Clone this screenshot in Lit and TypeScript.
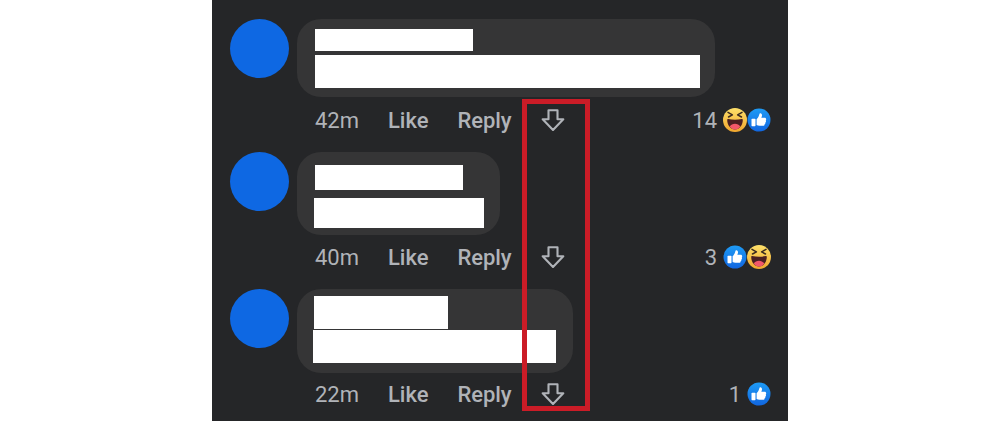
import { LitElement, html, css, svg } from "lit";
import { customElement } from "lit/decorators.js";

const like = html`<svg class="react" viewBox="0 0 24 24">
  <defs>
    <linearGradient id="lg" x1="0" y1="0" x2="0" y2="1">
      <stop offset="0" stop-color="#1e9bf5" />
      <stop offset="1" stop-color="#1166e0" />
    </linearGradient>
  </defs>
  <circle cx="12" cy="12" r="11.500" fill="url(#lg)" />
  ${svg`<path fill="#fff" d="M5.200 10.800h2.600c.4 0 .7.300.7.700v6c0 .4-.3.700-.7.700H5.200c-.4 0-.7-.3-.7-.7v-6c0-.4.300-.7.700-.7z" />
  <path fill="#fff" d="M9.600 11.200c1.300-1 2.200-2.600 2.600-4.400.2-.9.4-1.600 1.200-1.600 1.200 0 1.700 1.200 1.600 2.400-.1.800-.4 1.500-.7 2.200h3.200c1.100 0 1.700.7 1.700 1.500 0 .5-.2.900-.5 1.200.3.300.4.700.3 1.100-.1.400-.3.700-.6.900.1.400.1.800-.1 1.100-.2.300-.4.500-.7.600.1.900-.5 1.600-1.500 1.600h-3.600c-1.100 0-2-.3-2.900-.8z" />`}
</svg>`;

const haha = html`<svg class="react" viewBox="0 0 24 24">
  <defs>
    <linearGradient id="hg" x1="0" y1="0" x2="0" y2="1">
      <stop offset="0" stop-color="#fde06a" />
      <stop offset="1" stop-color="#f0a62e" />
    </linearGradient>
  </defs>
  <circle cx="12" cy="12" r="12" fill="url(#hg)" />
  ${svg`<path fill="none" stroke="#3a2a20" stroke-width="1.500" stroke-linecap="round" stroke-linejoin="round" d="M5 4.400l4.400 2.500-3.900 2.100M19 4.400l-4.400 2.500 3.900 2.100" />
  <path fill="#4a1f22" d="M4.200 11.800c0-.5.400-.8.900-.7 4.600.8 9.200.8 13.800 0 .5-.1.900.2.900.7 0 5.200-3.300 9.800-7.800 9.800S4.200 17 4.200 11.800z" />
  <path fill="#f2586a" d="M6.800 18.400c1.100-1.700 3-2.700 5.200-2.700s4.100 1 5.200 2.700c-1.300 2-3.100 3.200-5.200 3.200s-3.900-1.200-5.200-3.200z" />`}
</svg>`;

const arrow = html`<svg class="arrow" viewBox="0 0 24 22">
  <path fill="none" stroke="currentColor" stroke-width="2.100" stroke-linejoin="round" d="M7.500 1.300h9v9h5.800L12 21 1.700 10.300h5.800z" />
</svg>`;

interface Bar {
  w: number;
  h: number;
  ml: number;
  mt: number;
}

interface Comment {
  time: string;
  bubble: [number, number];
  pad: number;
  bars: Bar[];
  metaTop: number;
  count: string;
  reacts: unknown[];
}

const comments: Comment[] = [
  {
    time: "42m",
    bubble: [418, 78],
    pad: 10,
    bars: [
      { w: 158, h: 22, ml: 18, mt: 0 },
      { w: 385, h: 33, ml: 18, mt: 4 },
    ],
    metaTop: 8,
    count: "14",
    reacts: [haha, like],
  },
  {
    time: "40m",
    bubble: [203, 83],
    pad: 13,
    bars: [
      { w: 148, h: 25, ml: 18, mt: 0 },
      { w: 170, h: 30, ml: 17, mt: 8 },
    ],
    metaTop: 7,
    count: "3",
    reacts: [like, haha],
  },
  {
    time: "22m",
    bubble: [276, 84],
    pad: 7,
    bars: [
      { w: 134, h: 33, ml: 17, mt: 0 },
      { w: 243, h: 33, ml: 16, mt: 1 },
    ],
    metaTop: 6,
    count: "1",
    reacts: [like],
  },
];

@customElement("app-root")
export class AppRoot extends LitElement {
  static styles = css`
    :host {
      display: block;
      height: 421px;
      background: #fff;
      font-family: Roboto, "Liberation Sans", sans-serif;
    }
    .panel {
      position: relative;
      width: 576px;
      height: 421px;
      margin-left: 212px;
      padding: 19px 17px 0 18px;
      box-sizing: border-box;
      background: #252628;
      overflow: hidden;
    }
    .comment {
      display: flex;
      gap: 8px;
      height: 137px;
    }
    .comment:first-child {
      height: 133px;
    }
    .avatar {
      flex: none;
      width: 59px;
      height: 59px;
      border-radius: 50%;
      background: #0e68e3;
    }
    .body {
      flex: 1;
      min-width: 0;
    }
    .bubble {
      box-sizing: border-box;
      background: #353536;
      border-radius: 24px;
    }
    .bar {
      background: #fff;
    }
    .meta {
      display: flex;
      align-items: center;
      gap: 29px;
      height: 30px;
      padding-left: 18px;
      font-size: 22px;
      color: #b0b3b8;
    }
    .action {
      font-weight: 500;
      letter-spacing: -0.05px;
    }
    .arrow {
      width: 24px;
      height: 22px;
    }
    .count {
      display: flex;
      align-items: center;
      gap: 6px;
      margin-left: auto;
    }
    .reacts {
      display: flex;
    }
    .react {
      width: 24px;
      height: 24px;
      display: block;
    }
    .highlight {
      position: absolute;
      left: 310px;
      top: 99px;
      width: 68px;
      height: 312px;
      box-sizing: border-box;
      border: 5px solid #cb1c27;
    }
  `;

  render() {
    return html`
      <div class="panel">
        ${comments.map(
          (c) => html`
            <div class="comment">
              <div class="avatar"></div>
              <div class="body">
                <div
                  class="bubble"
                  style="width:${c.bubble[0]}px;height:${c.bubble[1]}px;padding-top:${c.pad}px"
                >
                  ${c.bars.map(
                    (b) => html`<div
                      class="bar"
                      style="width:${b.w}px;height:${b.h}px;margin-left:${b.ml}px;margin-top:${b.mt}px"
                    ></div>`
                  )}
                </div>
                <div class="meta" style="margin-top:${c.metaTop}px">
                  <span>${c.time}</span>
                  <span class="action">Like</span>
                  <span class="action">Reply</span>
                  ${arrow}
                  <div class="count">
                    <span>${c.count}</span>
                    <div class="reacts">${c.reacts}</div>
                  </div>
                </div>
              </div>
            </div>
          `
        )}
        <div class="highlight"></div>
      </div>
    `;
  }
}
